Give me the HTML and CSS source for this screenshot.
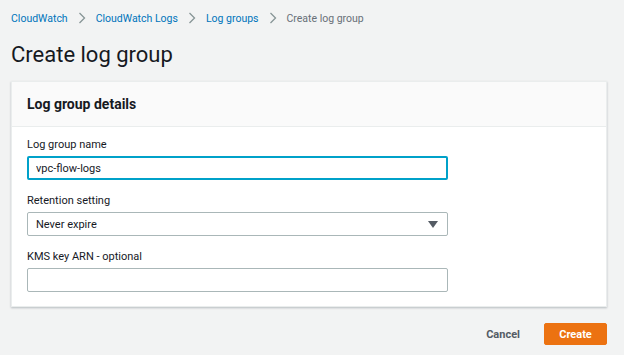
FILE: index.html
```html
<!DOCTYPE html>
<html lang="en">
<head>
    <meta charset="UTF-8">
    <title>Create log group</title>
    <link rel="stylesheet" href="styles.css">
</head>
<body>
    <nav class="breadcrumbs">
        <a href="#">CloudWatch</a>
        <span class="sep"><svg width="8" height="12" viewBox="0 0 8 12"><path d="M1.5 1 L6.5 6 L1.5 11" fill="none" stroke="#879596" stroke-width="1.3"/></svg></span>
        <a href="#">CloudWatch Logs</a>
        <span class="sep"><svg width="8" height="12" viewBox="0 0 8 12"><path d="M1.5 1 L6.5 6 L1.5 11" fill="none" stroke="#879596" stroke-width="1.3"/></svg></span>
        <a href="#">Log groups</a>
        <span class="sep"><svg width="8" height="12" viewBox="0 0 8 12"><path d="M1.5 1 L6.5 6 L1.5 11" fill="none" stroke="#879596" stroke-width="1.3"/></svg></span>
        <span class="current">Create log group</span>
    </nav>

    <h1>Create log group</h1>

    <div class="panel">
        <div class="panel-header">
            <h2>Log group details</h2>
        </div>
        <div class="panel-body">
            <div class="field">
                <label>Log group name</label>
                <input type="text" class="text-input focused" value="vpc-flow-logs">
            </div>
            <div class="field">
                <label>Retention setting</label>
                <div class="select">
                    <span>Never expire</span>
                    <svg width="10" height="7" viewBox="0 0 10 7"><path d="M0 0 H10 L5 7 Z" fill="#545b64"/></svg>
                </div>
            </div>
            <div class="field">
                <label>KMS key ARN - optional</label>
                <input type="text" class="text-input">
            </div>
        </div>
    </div>

    <div class="actions">
        <button class="link-btn">Cancel</button>
        <button class="primary-btn">Create</button>
    </div>
</body>
</html>
```

FILE: styles.css
```css
* {
    margin: 0;
    padding: 0;
    box-sizing: border-box;
}

body {
    font-family: Roboto, Arial, sans-serif;
    background-color: #f2f3f3;
    color: #16191f;
    padding: 11px 17px 0 11px;
}

.breadcrumbs {
    display: flex;
    align-items: center;
    height: 14px;
    font-size: 10.5px;
}

.breadcrumbs a {
    color: #0073bb;
    text-decoration: none;
}

.breadcrumbs .sep {
    display: flex;
    margin: 0 10px 0 10px;
}

.breadcrumbs .current {
    color: #687078;
}

h1 {
    font-size: 22px;
    font-weight: 400;
    line-height: 28px;
    margin: 16px 0 12px;
}

.panel {
    background: white;
    border: 1px solid #eaeded;
    box-shadow: 0 1px 2px rgba(0, 22, 40, 0.25);
}

.panel-header {
    background: #fafafa;
    border-bottom: 1px solid #eaeded;
    height: 45px;
    display: flex;
    align-items: center;
    padding-left: 15px;
}

.panel-header h2 {
    font-size: 14px;
    font-weight: 700;
}

.panel-body {
    padding: 11px 15px 14px;
}

.field {
    width: 421px;
    margin-bottom: 14px;
}

.field:last-child {
    margin-bottom: 0;
}

.field label {
    display: block;
    font-size: 11px;
    line-height: 14px;
    margin-bottom: 4px;
}

.text-input, .select {
    width: 100%;
    height: 24px;
    border: 1px solid #aab7b8;
    border-radius: 2px;
    font-family: inherit;
    font-size: 11px;
    padding: 0 8px;
    color: #16191f;
    outline: none;
}

.text-input.focused {
    border: 2px solid #00a1c9;
    padding: 0 7px;
}

.select {
    display: flex;
    align-items: center;
    justify-content: space-between;
    padding-right: 9px;
}

.actions {
    display: flex;
    justify-content: flex-end;
    align-items: center;
    margin-top: 16px;
    gap: 24px;
}

.link-btn {
    background: none;
    border: none;
    font-family: inherit;
    font-size: 11px;
    font-weight: 700;
    color: #545b64;
    cursor: pointer;
}

.primary-btn {
    background: #ec7211;
    border: 1px solid #ec7211;
    border-radius: 2px;
    color: white;
    font-family: inherit;
    font-size: 11px;
    font-weight: 700;
    width: 63px;
    height: 22px;
    cursor: pointer;
}
```
